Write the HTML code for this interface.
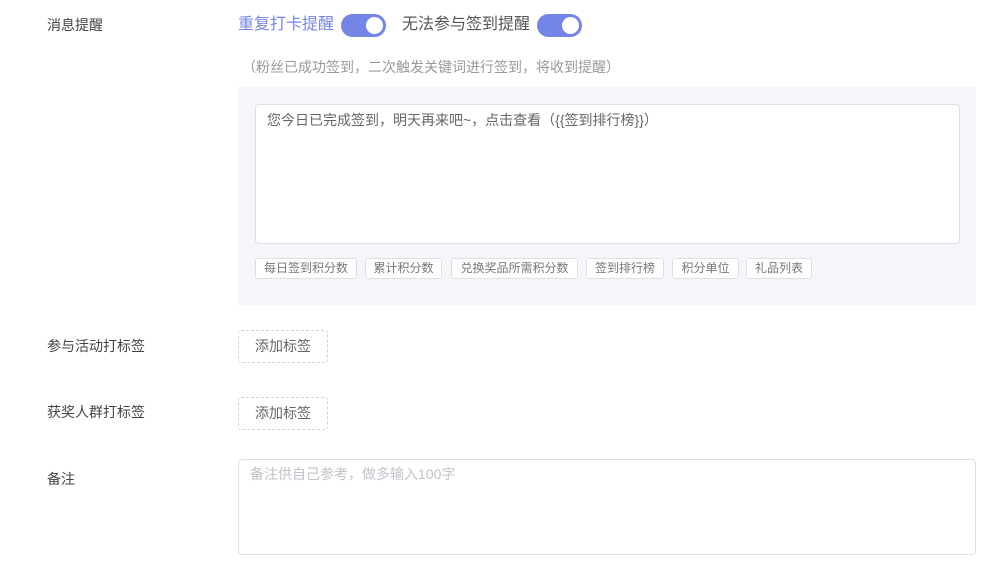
<!DOCTYPE html>
<html><head><meta charset="utf-8"><style>
*{margin:0;padding:0;box-sizing:border-box}
body{width:1006px;height:569px;background:#fff;position:relative;overflow:hidden;font-family:"Liberation Sans","Noto Sans CJK SC",sans-serif;color:#444}
.a{position:absolute;white-space:nowrap}
.lbl{font-size:14px;color:#444;line-height:20px}
.tog{position:absolute;width:45px;height:23px;border-radius:12px;background:#7585e6}
.tog::after{content:"";position:absolute;right:3px;top:3px;width:17px;height:17px;border-radius:50%;background:#fff}
.tag{position:absolute;top:258px;height:21px;border:1px solid #dcdfe6;border-radius:3px;background:#fff;font-size:12px;color:#777;line-height:19px;text-align:center}
.add{position:absolute;left:238px;width:90px;height:33px;border:1px dashed #d0d3da;border-radius:3px;font-size:14px;color:#666;line-height:31px;text-align:center}
</style></head><body>
<div class="a lbl" style="left:47px;top:15px">消息提醒</div>
<div class="a" style="left:238px;top:14px;font-size:16px;line-height:22px;color:#7585e6">重复打卡提醒</div>
<div class="tog" style="left:341px;top:14px"></div>
<div class="a" style="left:402px;top:14px;font-size:16px;line-height:22px;color:#555">无法参与签到提醒</div>
<div class="tog" style="left:537px;top:14px"></div>
<div class="a" style="left:242px;top:57px;font-size:14px;line-height:20px;color:#999">（粉丝已成功签到，二次触发关键词进行签到，将收到提醒）</div>
<div class="a" style="left:238px;top:87px;width:738px;height:218px;background:#f5f6fa"></div>
<div class="a" style="left:255px;top:104px;width:705px;height:140px;background:#fff;border:1px solid #dcdfe6;border-radius:4px"></div>
<div class="a" style="left:267px;top:110px;font-size:14px;line-height:20px;color:#666">您今日已完成签到，明天再来吧~，点击查看（{{签到排行榜}}）</div>
<div class="tag" style="left:255px;width:102px">每日签到积分数</div>
<div class="tag" style="left:365px;width:77px">累计积分数</div>
<div class="tag" style="left:451px;width:127px">兑换奖品所需积分数</div>
<div class="tag" style="left:586px;width:78px">签到排行榜</div>
<div class="tag" style="left:672px;width:67px">积分单位</div>
<div class="tag" style="left:746px;width:66px">礼品列表</div>
<div class="a lbl" style="left:47px;top:336px">参与活动打标签</div>
<div class="add" style="top:330px">添加标签</div>
<div class="a lbl" style="left:47px;top:402px">获奖人群打标签</div>
<div class="add" style="top:397px">添加标签</div>
<div class="a lbl" style="left:47px;top:469px">备注</div>
<div class="a" style="left:238px;top:459px;width:738px;height:96px;border:1px solid #dcdfe6;border-radius:4px"></div>
<div class="a" style="left:250px;top:464px;font-size:14px;line-height:20px;color:#bfc2c8">备注供自己参考，做多输入100字</div>
</body></html>
